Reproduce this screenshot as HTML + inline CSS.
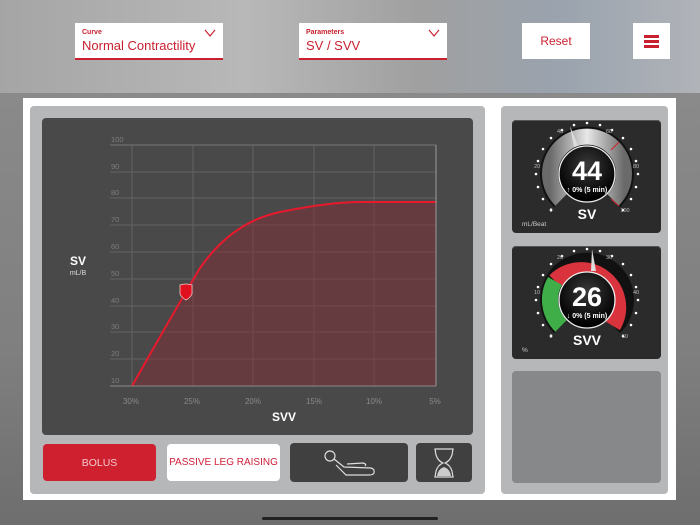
<!DOCTYPE html>
<html><head><meta charset="utf-8"><style>
*{margin:0;padding:0;box-sizing:border-box}
body{width:700px;height:525px;overflow:hidden;position:relative;font-family:"Liberation Sans",sans-serif;background:linear-gradient(90deg,#9a9a9a 0%,#b5b5b5 30%,#a9a9a9 60%,#8d96a3 80%,#aab0b8 100%)}
.top{position:absolute;left:0;top:0;width:700px;height:93px;background:linear-gradient(90deg,#a5a5a5,#b8b8b8 35%,#a0a0a0 60%,#9aa3ae 80%,#b0b3b8)}
.bot{position:absolute;left:0;top:93px;width:700px;height:432px;background:linear-gradient(180deg,#8a8a8a,#7f7f7f 60%,#6e6e6e)}
.dd{position:absolute;background:#fff;border-bottom:2px solid #c8202f;height:37px}
.dd .l{position:absolute;left:7px;top:6px;font-size:7px;color:#c8202f;font-weight:bold}
.dd .v{position:absolute;left:7px;top:15px;font-size:13px;color:#c8202f}
.dd svg{position:absolute;right:7px;top:6px}
.btn{position:absolute;background:#fff;display:flex;align-items:center;justify-content:center;color:#c8202f}
.white{position:absolute;left:23px;top:98px;width:653px;height:402px;background:#fff}
.gp{position:absolute;background:#b6b7b9;border-radius:4px}
.chart{position:absolute;left:42px;top:118px;width:431px;height:317px;background:#494949;border-radius:4px}
.b{position:absolute;border-radius:4px;display:flex;align-items:center;justify-content:center;font-size:10.5px;white-space:nowrap}
.gauge{position:absolute;left:512px;width:149px;height:113px;background:#2b2b2b;border-radius:4px;box-shadow:inset 0 1px 0 #555}
</style></head><body>
<div class="top"></div><div class="bot"></div>
<div class="dd" style="left:75px;top:23px;width:148px"><div class="l">Curve</div><div class="v">Normal Contractility</div><svg width="12" height="8"><path d="M1 1L6 7L11 1" fill="none" stroke="#c8202f" stroke-width="1.2"/></svg></div>
<div class="dd" style="left:299px;top:23px;width:148px"><div class="l">Parameters</div><div class="v">SV / SVV</div><svg width="12" height="8"><path d="M1 1L6 7L11 1" fill="none" stroke="#c8202f" stroke-width="1.2"/></svg></div>
<div class="btn" style="left:522px;top:23px;width:68px;height:36px;font-size:12px">Reset</div>
<div class="btn" style="left:633px;top:23px;width:37px;height:36px"><svg width="15" height="15"><rect y="1" width="15" height="3" fill="#c8202f"/><rect y="6" width="15" height="3" fill="#c8202f"/><rect y="11" width="15" height="3" fill="#c8202f"/></svg></div>
<div class="white"></div>
<div class="gp" style="left:30px;top:106px;width:455px;height:388px"></div>
<div class="gp" style="left:501px;top:106px;width:167px;height:388px"></div>
<div class="chart"></div>
<svg style="position:absolute;left:0;top:0" width="700" height="525" font-family="Liberation Sans">
<g stroke="#636363" stroke-width="1">
<line x1="110" y1="145" x2="436" y2="145"/><line x1="110" y1="172" x2="436" y2="172"/><line x1="110" y1="198" x2="436" y2="198"/><line x1="110" y1="225" x2="436" y2="225"/><line x1="110" y1="252" x2="436" y2="252"/><line x1="110" y1="279" x2="436" y2="279"/><line x1="110" y1="306" x2="436" y2="306"/><line x1="110" y1="332" x2="436" y2="332"/><line x1="110" y1="359" x2="436" y2="359"/>
<line x1="132" y1="145" x2="132" y2="386"/><line x1="193" y1="145" x2="193" y2="386"/><line x1="253" y1="145" x2="253" y2="386"/><line x1="314" y1="145" x2="314" y2="386"/><line x1="374" y1="145" x2="374" y2="386"/></g>
<path d="M132 386 Q175 310 200 268 Q232 222 280 212 Q330 202 360 202 L436 202 L436 386 Z" fill="#8a2a33" fill-opacity="0.45"/>
<path d="M132 386 Q175 310 200 268 Q232 222 280 212 Q330 202 360 202 L436 202" fill="none" stroke="#e8192c" stroke-width="2"/>
<line x1="110" y1="386" x2="436" y2="386" stroke="#8a8a8a"/>
<line x1="436" y1="145" x2="436" y2="386" stroke="#9a9a9a"/>
<line x1="110" y1="145" x2="436" y2="145" stroke="#777"/>
<g fill="#7d7d7d" font-size="7.5"><text x="111" y="142">100</text><text x="111" y="169">90</text><text x="111" y="195">80</text><text x="111" y="222">70</text><text x="111" y="249">60</text><text x="111" y="276">50</text><text x="111" y="303">40</text><text x="111" y="329">30</text><text x="111" y="356">20</text><text x="111" y="383">10</text></g>
<g fill="#8a8a8a" font-size="8" text-anchor="middle"><text x="131" y="404">30%</text><text x="192" y="404">25%</text><text x="253" y="404">20%</text><text x="314" y="404">15%</text><text x="374" y="404">10%</text><text x="435" y="404">5%</text></g>
<text x="78" y="265" fill="#fff" font-size="12" font-weight="bold" text-anchor="middle">SV</text>
<text x="78" y="275" fill="#ddd" font-size="7" text-anchor="middle">mL/B</text>
<text x="284" y="421" fill="#fff" font-size="12" font-weight="bold" text-anchor="middle">SVV</text>
<path d="M180 285 Q186 283 192 285 L192 294 Q190 298 186 300 Q182 298 180 294 Z" fill="#e0101f" stroke="#f2c6c6" stroke-width="0.8"/>
</svg>
<div class="b" style="left:43px;top:444px;width:113px;height:37px;background:#cf2030;color:#f3c8cc">BOLUS</div>
<div class="b" style="left:167px;top:444px;width:113px;height:37px;background:#fff;color:#d0203a;font-size:10px">PASSIVE LEG RAISING</div>
<div class="b" style="left:290px;top:443px;width:118px;height:39px;background:#404040"><svg width="60" height="30"><circle cx="11" cy="8" r="5" fill="none" stroke="#ddd" stroke-width="1.2"/><path d="M15 11L25 19L52 20Q56 21 55 25Q54 27 50 27L27 27L17 17M28 16L44 15Q48 16 46 18" fill="none" stroke="#ddd" stroke-width="1.2"/></svg></div>
<div class="b" style="left:416px;top:443px;width:56px;height:39px;background:#404040"><svg width="24" height="32"><path d="M3 2H21L20 8Q18 14 13 16Q18 18 20 24L21 30H3L4 24Q6 18 11 16Q6 14 4 8Z" fill="none" stroke="#ddd" stroke-width="1.2"/><path d="M5 29Q6 22 12 20Q18 22 19 29Z" fill="#ccc"/></svg></div>
<div style="position:absolute;left:512px;top:371px;width:149px;height:112px;background:#87888a;border-radius:4px"></div>

<div class="gauge" style="top:120px"></div>
<div class="gauge" style="top:246px"></div>
<svg style="position:absolute;left:0;top:0" width="700" height="525" font-family="Liberation Sans">
<defs><radialGradient id="bk" cx="50%" cy="35%" r="60%"><stop offset="0" stop-color="#3a3a3a"/><stop offset="1" stop-color="#000"/></radialGradient>
<linearGradient id="gr" x1="0" y1="0" x2="1" y2="0"><stop offset="0" stop-color="#6a6a6a"/><stop offset="0.5" stop-color="#e8e8e8"/><stop offset="1" stop-color="#6a6a6a"/></linearGradient></defs>
<!-- SV gauge -->
<g transform="translate(587,174)">
<g fill="#fff"><circle cx="0" cy="-51" r="1.3"/><circle cx="-13" cy="-49" r="1.3"/><circle cx="13" cy="-49" r="1.3"/><circle cx="-25" cy="-44" r="1.3"/><circle cx="25" cy="-44" r="1.3"/><circle cx="-36" cy="-36" r="1.3"/><circle cx="36" cy="-36" r="1.3"/><circle cx="-44" cy="-25" r="1.3"/><circle cx="44" cy="-25" r="1.3"/><circle cx="-49" cy="-13" r="1.3"/><circle cx="49" cy="-13" r="1.3"/><circle cx="-51" cy="0" r="1.3"/><circle cx="51" cy="0" r="1.3"/><circle cx="-49" cy="13" r="1.3"/><circle cx="49" cy="13" r="1.3"/><circle cx="-44" cy="25" r="1.3"/><circle cx="44" cy="25" r="1.3"/><circle cx="-36" cy="36" r="1.3"/><circle cx="36" cy="36" r="1.3"/></g>
<path d="M-26 26A37 37 0 1 1 26 26" fill="none" stroke="#111" stroke-width="20"/>
<path d="M-26 26A37 37 0 1 1 26 26" fill="none" stroke="url(#gr)" stroke-width="16"/>
<line x1="24" y1="-24" x2="32" y2="-32" stroke="#d0202a" stroke-width="1"/><line x1="24" y1="25" x2="32" y2="32" stroke="#d0202a" stroke-width="1"/>
<path d="M-17 -48L-9 -28L-13 -27Z" fill="#ddd"/>
<circle r="28" fill="url(#bk)" stroke="#eee" stroke-width="1.3"/>
<text y="6" fill="#fff" font-size="27" font-weight="bold" text-anchor="middle">44</text>
<text y="18" fill="#fff" font-size="7" font-weight="bold" text-anchor="middle">↑ 0% (5 min)</text>
<text y="45" fill="#fff" font-size="14" font-weight="bold" text-anchor="middle">SV</text>
<g fill="#bbb" font-size="5.5" text-anchor="middle"><text x="-36" y="38">0</text><text x="-50" y="-6">20</text><text x="-27" y="-41">40</text><text x="22" y="-41">60</text><text x="49" y="-6">80</text><text x="38" y="38">100</text></g>
</g>
<text x="522" y="226" fill="#ccc" font-size="6.5">mL/Beat</text>
<!-- SVV gauge -->
<g transform="translate(587,300)">
<g fill="#fff"><circle cx="0" cy="-51" r="1.3"/><circle cx="-13" cy="-49" r="1.3"/><circle cx="13" cy="-49" r="1.3"/><circle cx="-25" cy="-44" r="1.3"/><circle cx="25" cy="-44" r="1.3"/><circle cx="-36" cy="-36" r="1.3"/><circle cx="36" cy="-36" r="1.3"/><circle cx="-44" cy="-25" r="1.3"/><circle cx="44" cy="-25" r="1.3"/><circle cx="-49" cy="-13" r="1.3"/><circle cx="49" cy="-13" r="1.3"/><circle cx="-51" cy="0" r="1.3"/><circle cx="51" cy="0" r="1.3"/><circle cx="-49" cy="13" r="1.3"/><circle cx="49" cy="13" r="1.3"/><circle cx="-44" cy="25" r="1.3"/><circle cx="44" cy="25" r="1.3"/><circle cx="-36" cy="36" r="1.3"/><circle cx="36" cy="36" r="1.3"/></g>
<path d="M-26 26A37 37 0 1 1 26 26" fill="none" stroke="#111" stroke-width="20"/>
<path d="M-32 -19A37 37 0 0 1 26 26" fill="none" stroke="#d9333d" stroke-width="16"/>
<path d="M-26 26A37 37 0 0 1 -32 -19" fill="none" stroke="#3fae49" stroke-width="16"/>
<path d="M5 -51L9 -29L4 -29Z" fill="#ddd"/>
<circle r="28" fill="url(#bk)" stroke="#eee" stroke-width="1.3"/>
<text y="6" fill="#fff" font-size="27" font-weight="bold" text-anchor="middle">26</text>
<text y="18" fill="#fff" font-size="7" font-weight="bold" text-anchor="middle">↓ 0% (5 min)</text>
<text y="45" fill="#fff" font-size="14" font-weight="bold" text-anchor="middle">SVV</text>
<g fill="#bbb" font-size="5.5" text-anchor="middle"><text x="-36" y="38">0</text><text x="-50" y="-6">10</text><text x="-27" y="-41">20</text><text x="22" y="-41">30</text><text x="49" y="-6">40</text><text x="38" y="38">50</text></g>
</g>
<text x="522" y="352" fill="#ccc" font-size="6.5">%</text>
<rect x="262" y="517" width="176" height="3" rx="1.5" fill="#222"/>
</svg>
</body></html>
